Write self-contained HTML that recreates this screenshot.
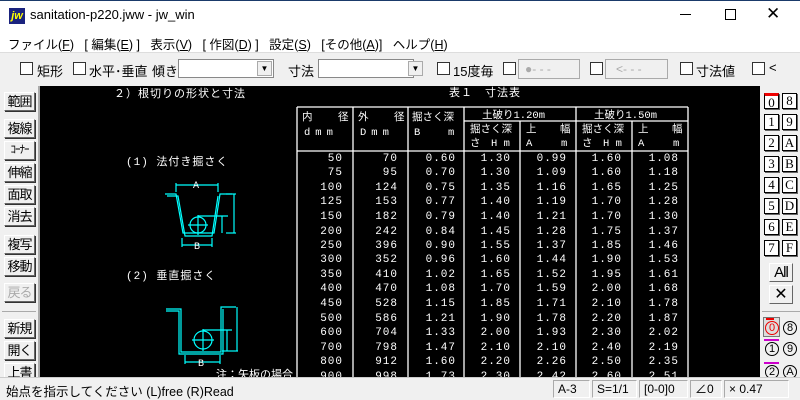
<!DOCTYPE html>
<html><head><meta charset="utf-8"><style>
*{margin:0;padding:0;box-sizing:border-box}
body{width:800px;height:400px;overflow:hidden;background:#f0f0f0;font-family:"Liberation Sans","Noto Sans CJK JP",sans-serif;font-size:12px;color:#000;position:relative}
.a{position:absolute}
.cb{position:absolute;width:13px;height:13px;border:1px solid #333;background:#fff}
.lb{position:absolute;left:4px;width:31px;height:19px;background:#f0f0f0;border:1px solid;border-color:#fff #666 #666 #fff;box-shadow:1px 1px 0 #333;font-size:13px;text-align:center;line-height:17px;letter-spacing:-1px}
.rb{position:absolute;width:15px;height:16px;background:#fff;border:1px solid #000;box-shadow:1px 1px 0 #666;font-family:"Liberation Serif",serif;font-size:13px;text-align:center;line-height:14px}
.sb{position:absolute;top:380px;height:18px;border:1px solid;border-color:#aaa #fff #fff #aaa;line-height:16px;padding-left:4px;font-size:12px}
</style></head><body>
<!-- title bar -->
<div class="a" style="left:0;top:0;width:800px;height:30px;background:#fff;border-top:1px solid #1a3a6a"></div>
<div class="a" style="left:9px;top:8px;width:16px;height:16px;background:#1a237e;color:#ff0;font-size:11px;font-weight:bold;font-style:italic;line-height:16px;text-align:center">jw</div>
<div class="a" style="left:30px;top:7px;font-size:13px">sanitation-p220.jww - jw_win</div>
<div class="a" style="left:680px;top:14px;width:11px;height:1px;background:#000"></div>
<div class="a" style="left:725px;top:9px;width:11px;height:11px;border:1px solid #000"></div>
<div class="a" style="left:766px;top:4px;font-size:17px;font-weight:lighter">✕</div>
<!-- menu -->
<div class="a" style="left:0;top:30px;width:800px;height:22px;background:#fff"></div>
<div class="a" style="left:8px;top:34px;font-size:12.5px;word-spacing:0;white-space:pre">ファイル(<u>F</u>)   [ 編集(<u>E</u>) ]   表示(<u>V</u>)   [ 作図(<u>D</u>) ]   設定(<u>S</u>)   [その他(<u>A</u>)]   ヘルプ(<u>H</u>)</div>
<!-- toolbar -->
<div class="a" style="left:0;top:52px;width:800px;height:1px;background:#ddd"></div>
<div class="cb" style="left:20px;top:62px"></div><div class="a" style="left:37px;top:61px;font-size:13px">矩形</div>
<div class="cb" style="left:73px;top:62px"></div><div class="a" style="left:89px;top:61px;font-size:13px">水平･垂直</div>
<div class="a" style="left:152px;top:61px;font-size:13px">傾き</div>
<div class="a" style="left:178px;top:59px;width:96px;height:19px;background:#fff;border:1px solid #888"></div>
<div class="a" style="left:257px;top:61px;width:15px;height:15px;border:1px solid #aaa;background:#f0f0f0;font-size:8px;text-align:center;line-height:14px">▼</div>
<div class="a" style="left:288px;top:61px;font-size:13px">寸法</div>
<div class="a" style="left:318px;top:59px;width:96px;height:19px;background:#fff;border:1px solid #888"></div>
<div class="a" style="left:408px;top:61px;width:15px;height:15px;border:1px solid #aaa;background:#f0f0f0;font-size:8px;text-align:center;line-height:14px">▼</div>
<div class="cb" style="left:437px;top:62px"></div><div class="a" style="left:453px;top:61px;font-size:13px">15度毎</div>
<div class="cb" style="left:503px;top:62px"></div>
<div class="a" style="left:518px;top:59px;width:62px;height:20px;border:1px solid #aaa;background:#f0f0f0;color:#aaa;font-size:12px;line-height:18px;padding-left:6px">●- - -</div>
<div class="cb" style="left:590px;top:62px"></div>
<div class="a" style="left:605px;top:59px;width:63px;height:20px;border:1px solid #aaa;background:#f0f0f0;color:#aaa;font-size:12px;line-height:18px;padding-left:10px">&lt;- - -</div>
<div class="cb" style="left:680px;top:62px"></div><div class="a" style="left:696px;top:61px;font-size:13px">寸法値</div>
<div class="cb" style="left:752px;top:62px"></div><div class="a" style="left:769px;top:60px;font-size:13px">&lt;</div>
<!-- left panel -->
<div class="a" style="left:38px;top:86px;width:2px;height:292px;background:#aaa"></div>
<div class="lb" style="top:92px">範囲</div>
<div class="lb" style="top:119px">複線</div>
<div class="lb" style="top:141px;font-size:11px">ｺｰﾅｰ</div>
<div class="lb" style="top:163px">伸縮</div>
<div class="lb" style="top:185px">面取</div>
<div class="lb" style="top:207px">消去</div>
<div class="lb" style="top:235px">複写</div>
<div class="lb" style="top:257px">移動</div>
<div class="lb" style="top:283px;color:#aaa">戻る</div>
<div class="a" style="left:2px;top:311px;width:34px;height:1px;background:#aaa"></div>
<div class="lb" style="top:319px">新規</div>
<div class="lb" style="top:341px">開く</div>
<div class="lb" style="top:363px">上書</div>
<!-- canvas -->
<svg class="a" style="left:40px;top:86px" width="720" height="292" viewBox="40 86 720 292" font-family="Liberation Mono,Noto Sans CJK JP,monospace" font-size="11">
<rect x="40" y="86" width="720" height="292" fill="#000"/>
<g fill="#fff">
<text x="114" y="97" letter-spacing="1">２）根切りの形状と寸法</text>
<text x="126" y="165" letter-spacing="1">(1) 法付き掘さく</text>
<text x="126" y="279" letter-spacing="1">(2) 垂直掘さく</text>
<text x="216" y="378">注：矢板の場合</text>
<text x="449" y="96" letter-spacing="1">表１　寸法表</text>
</g>
<g stroke="#fff" stroke-width="1.3" fill="none">
<line x1="297" y1="107" x2="688" y2="107"/>
<line x1="464" y1="121" x2="688" y2="121"/>
<line x1="297" y1="151" x2="688" y2="151"/>
<line x1="297" y1="107" x2="297" y2="378"/><line x1="353" y1="107" x2="353" y2="378"/><line x1="408" y1="107" x2="408" y2="378"/><line x1="464" y1="107" x2="464" y2="378"/><line x1="520" y1="121" x2="520" y2="378"/><line x1="576" y1="107" x2="576" y2="378"/><line x1="632" y1="121" x2="632" y2="378"/><line x1="688" y1="107" x2="688" y2="378"/>
</g>
<g fill="#fff" font-size="10.5">
<text x="302" y="120">内</text><text x="338" y="120">径</text>
<text x="304" y="135" letter-spacing="5">dmm</text>
<text x="358" y="120">外</text><text x="394" y="120">径</text>
<text x="360" y="135" letter-spacing="5">Dmm</text>
<text x="412" y="120">掘さく深</text><text x="414" y="135">B</text><text x="448" y="135">m</text>
<text x="482" y="118">土破り1.20m</text><text x="594" y="118">土破り1.50m</text>
<text x="470" y="132">掘さく深</text><text x="470" y="146">さ　H m</text>
<text x="526" y="132">上</text><text x="560" y="132">幅</text><text x="526" y="146">A</text><text x="561" y="146">m</text>
<text x="582" y="132">掘さく深</text><text x="582" y="146">さ　H m</text>
<text x="638" y="132">上</text><text x="672" y="132">幅</text><text x="638" y="146">A</text><text x="673" y="146">m</text>
</g>
<g fill="#fff" font-size="11" text-anchor="end" letter-spacing="1">
<g id="c"></g>
<text x="343" y="161">50</text><text x="398" y="161">70</text><text x="456" y="161">0.60</text><text x="511" y="161">1.30</text><text x="567" y="161">0.99</text><text x="622" y="161">1.60</text><text x="679" y="161">1.08</text>
<text x="343" y="175">75</text><text x="398" y="175">95</text><text x="456" y="175">0.70</text><text x="511" y="175">1.30</text><text x="567" y="175">1.09</text><text x="622" y="175">1.60</text><text x="679" y="175">1.18</text>
<text x="343" y="190">100</text><text x="398" y="190">124</text><text x="456" y="190">0.75</text><text x="511" y="190">1.35</text><text x="567" y="190">1.16</text><text x="622" y="190">1.65</text><text x="679" y="190">1.25</text>
<text x="343" y="204">125</text><text x="398" y="204">153</text><text x="456" y="204">0.77</text><text x="511" y="204">1.40</text><text x="567" y="204">1.19</text><text x="622" y="204">1.70</text><text x="679" y="204">1.28</text>
<text x="343" y="219">150</text><text x="398" y="219">182</text><text x="456" y="219">0.79</text><text x="511" y="219">1.40</text><text x="567" y="219">1.21</text><text x="622" y="219">1.70</text><text x="679" y="219">1.30</text>
<text x="343" y="234">200</text><text x="398" y="234">242</text><text x="456" y="234">0.84</text><text x="511" y="234">1.45</text><text x="567" y="234">1.28</text><text x="622" y="234">1.75</text><text x="679" y="234">1.37</text>
<text x="343" y="248">250</text><text x="398" y="248">396</text><text x="456" y="248">0.90</text><text x="511" y="248">1.55</text><text x="567" y="248">1.37</text><text x="622" y="248">1.85</text><text x="679" y="248">1.46</text>
<text x="343" y="262">300</text><text x="398" y="262">352</text><text x="456" y="262">0.96</text><text x="511" y="262">1.60</text><text x="567" y="262">1.44</text><text x="622" y="262">1.90</text><text x="679" y="262">1.53</text>
<text x="343" y="277">350</text><text x="398" y="277">410</text><text x="456" y="277">1.02</text><text x="511" y="277">1.65</text><text x="567" y="277">1.52</text><text x="622" y="277">1.95</text><text x="679" y="277">1.61</text>
<text x="343" y="291">400</text><text x="398" y="291">470</text><text x="456" y="291">1.08</text><text x="511" y="291">1.70</text><text x="567" y="291">1.59</text><text x="622" y="291">2.00</text><text x="679" y="291">1.68</text>
<text x="343" y="306">450</text><text x="398" y="306">528</text><text x="456" y="306">1.15</text><text x="511" y="306">1.85</text><text x="567" y="306">1.71</text><text x="622" y="306">2.10</text><text x="679" y="306">1.78</text>
<text x="343" y="321">500</text><text x="398" y="321">586</text><text x="456" y="321">1.21</text><text x="511" y="321">1.90</text><text x="567" y="321">1.78</text><text x="622" y="321">2.20</text><text x="679" y="321">1.87</text>
<text x="343" y="335">600</text><text x="398" y="335">704</text><text x="456" y="335">1.33</text><text x="511" y="335">2.00</text><text x="567" y="335">1.93</text><text x="622" y="335">2.30</text><text x="679" y="335">2.02</text>
<text x="343" y="350">700</text><text x="398" y="350">798</text><text x="456" y="350">1.47</text><text x="511" y="350">2.10</text><text x="567" y="350">2.10</text><text x="622" y="350">2.40</text><text x="679" y="350">2.19</text>
<text x="343" y="364">800</text><text x="398" y="364">912</text><text x="456" y="364">1.60</text><text x="511" y="364">2.20</text><text x="567" y="364">2.26</text><text x="622" y="364">2.50</text><text x="679" y="364">2.35</text>
<text x="343" y="379">900</text><text x="398" y="379">998</text><text x="456" y="379">1.73</text><text x="511" y="379">2.30</text><text x="567" y="379">2.42</text><text x="622" y="379">2.60</text><text x="679" y="379">2.51</text>
</g>
<!-- drawing 1 -->
<g stroke="#0ff" stroke-width="1.2" fill="none">
<path d="M165 194 L176 194 L183 233 L214 233 L220 194 L232 194"/>
<path d="M167 196 L178 196 L185 236 L212 236 L218 196"/>
<line x1="176" y1="185" x2="218" y2="185"/><line x1="176" y1="183" x2="176" y2="192"/><line x1="218" y1="183" x2="218" y2="192"/>
<line x1="182" y1="245" x2="212" y2="245"/><line x1="182" y1="238" x2="182" y2="247"/><line x1="212" y1="238" x2="212" y2="247"/>
<circle cx="198" cy="225" r="8"/><line x1="188" y1="225" x2="208" y2="225"/><line x1="198" y1="215" x2="198" y2="235"/>
<line x1="198" y1="216" x2="228" y2="216"/><line x1="226" y1="194" x2="236" y2="194"/><line x1="226" y1="233" x2="236" y2="233"/><line x1="234" y1="194" x2="234" y2="233"/>
<line x1="222" y1="216" x2="222" y2="233"/>
<!-- drawing 2 -->
<path d="M166 309 L181 309 L181 352 L221 352 L221 307 L236 307"/>
<path d="M166 311 L179 311 L179 354 L223 354 L223 309"/>
<line x1="185" y1="362" x2="220" y2="362"/><line x1="185" y1="355" x2="185" y2="364"/><line x1="220" y1="355" x2="220" y2="364"/>
<circle cx="203" cy="340" r="9"/><line x1="192" y1="340" x2="214" y2="340"/><line x1="203" y1="329" x2="203" y2="351"/>
<line x1="203" y1="330" x2="232" y2="330"/><line x1="222" y1="351" x2="238" y2="351"/><line x1="237" y1="307" x2="237" y2="351"/>
<line x1="227" y1="330" x2="227" y2="351"/>
</g>
<g fill="#fff" font-size="10"><text x="193" y="188">A</text><text x="194" y="249">B</text><text x="198" y="366">B</text></g>
</svg>
<!-- right panel -->
<div class="rb" style="left:764px;top:93px;border-top:3px solid #e00;background:#fff">0</div><div class="rb" style="left:782px;top:93px">8</div>
<div class="rb" style="left:764px;top:114px">1</div><div class="rb" style="left:782px;top:114px">9</div>
<div class="rb" style="left:764px;top:135px">2</div><div class="rb" style="left:782px;top:135px">A</div>
<div class="rb" style="left:764px;top:156px">3</div><div class="rb" style="left:782px;top:156px">B</div>
<div class="rb" style="left:764px;top:177px">4</div><div class="rb" style="left:782px;top:177px">C</div>
<div class="rb" style="left:764px;top:198px">5</div><div class="rb" style="left:782px;top:198px">D</div>
<div class="rb" style="left:764px;top:219px">6</div><div class="rb" style="left:782px;top:219px">E</div>
<div class="rb" style="left:764px;top:240px">7</div><div class="rb" style="left:782px;top:240px">F</div>
<div class="a" style="left:769px;top:263px;width:24px;height:19px;border:1px solid;border-color:#fff #666 #666 #fff;font-size:15px;text-align:center;line-height:18px;letter-spacing:-1px">All</div>
<div class="a" style="left:769px;top:285px;width:24px;height:19px;border:1px solid;border-color:#fff #666 #666 #fff;font-size:16px;text-align:center;line-height:18px">✕</div>
<div class="a" style="left:762px;top:311px;width:38px;height:1px;background:#aaa"></div>
<div class="a" style="left:763px;top:317px;width:17px;height:20px;background:#ddd;border:1px solid #777"></div>
<div class="a" style="left:765px;top:321px;width:14px;height:14px;border:1px solid #e00;border-radius:50%;color:#e00;font-size:11px;text-align:center;line-height:12px">0</div>
<div class="a" style="left:766px;top:318px;width:8px;height:2px;background:#e00"></div>
<div class="a" style="left:783px;top:321px;width:14px;height:14px;border:1px solid #000;border-radius:50%;font-size:11px;text-align:center;line-height:12px">8</div>
<div class="a" style="left:764px;top:339px;width:15px;height:2px;background:#c0c"></div>
<div class="a" style="left:765px;top:342px;width:14px;height:14px;border:1px solid #000;border-radius:50%;font-size:11px;text-align:center;line-height:12px">1</div>
<div class="a" style="left:783px;top:342px;width:14px;height:14px;border:1px solid #000;border-radius:50%;font-size:11px;text-align:center;line-height:12px">9</div>
<div class="a" style="left:764px;top:362px;width:15px;height:2px;background:#c0c"></div>
<div class="a" style="left:765px;top:365px;width:14px;height:14px;border:1px solid #000;border-radius:50%;font-size:11px;text-align:center;line-height:12px">2</div>
<div class="a" style="left:783px;top:365px;width:14px;height:14px;border:1px solid #000;border-radius:50%;font-size:11px;text-align:center;line-height:12px">A</div>
<!-- status -->
<div class="a" style="left:0;top:377px;width:800px;height:23px;background:#f0f0f0;border-top:1px solid #ccc"></div>
<div class="a" style="left:6px;top:381px;font-size:12.5px">始点を指示してください (L)free (R)Read</div>
<div class="sb" style="left:553px;width:37px">A-3</div>
<div class="sb" style="left:592px;width:45px">S=1/1</div>
<div class="sb" style="left:639px;width:49px">[0-0]0</div>
<div class="sb" style="left:690px;width:32px">∠0</div>
<div class="sb" style="left:724px;width:65px">× 0.47</div>
</body></html>
